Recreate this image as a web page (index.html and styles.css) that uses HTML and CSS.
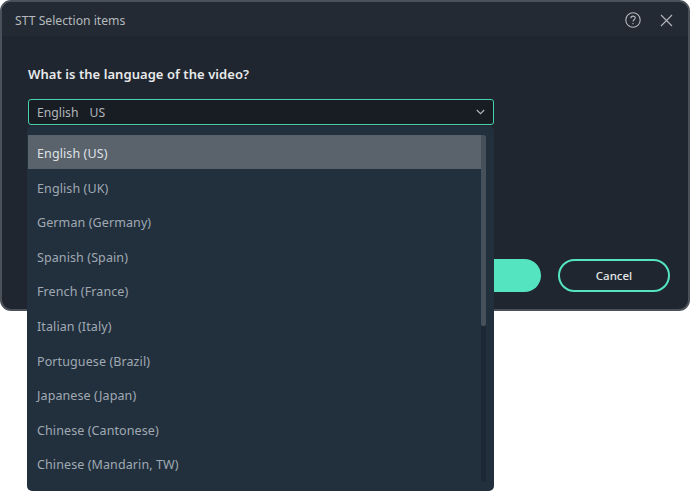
FILE: index.html
```html
<!DOCTYPE html>
<html lang="en">
<head>
<meta charset="utf-8">
<title>STT Selection items</title>
<link rel="stylesheet" href="styles.css">
</head>
<body>
<div class="dialog">
  <header class="titlebar">
    <span class="title">STT Selection items</span>
    <div class="title-icons">
      <svg class="icon" width="16" height="16" viewBox="0 0 16 16" fill="none" stroke="#b4b8bc" stroke-width="1.1"><circle cx="8" cy="8" r="7.2"/><path d="M5.8 6.2c0-1.3 1-2.1 2.2-2.1s2.2.8 2.2 2c0 1.7-2.2 1.7-2.2 3.4"/><path d="M8 11v1.2"/></svg>
      <svg class="icon" width="13" height="13" viewBox="0 0 13 13" fill="none" stroke="#b4b8bc" stroke-width="1.1"><path d="M1 1l11 11M12 1L1 12"/></svg>
    </div>
  </header>
  <main class="content">
    <h1 class="question">What is the language of the video?</h1>
    <div class="select-wrap">
      <div class="select">
        <span class="select-value"><span>English</span><span>US</span></span>
        <svg class="chevron" width="9" height="6" viewBox="0 0 9 6" fill="none" stroke="#b4b8bc" stroke-width="1.1"><path d="M.8 1l3.7 3.7L8.2 1"/></svg>
      </div>
      <div class="dropdown">
        <ul class="list">
          <li class="item active">English (US)</li>
          <li class="item">English (UK)</li>
          <li class="item">German (Germany)</li>
          <li class="item">Spanish (Spain)</li>
          <li class="item">French (France)</li>
          <li class="item">Italian (Italy)</li>
          <li class="item">Portuguese (Brazil)</li>
          <li class="item">Japanese (Japan)</li>
          <li class="item">Chinese (Cantonese)</li>
          <li class="item">Chinese (Mandarin, TW)</li>
        </ul>
        <div class="scrolltrack"><div class="scrollthumb"></div></div>
      </div>
    </div>
    <div class="actions">
      <button class="btn primary">OK</button>
      <button class="btn secondary">Cancel</button>
    </div>
  </main>
</div>
</body>
</html>
```
FILE: styles.css
```css
* { box-sizing: border-box; }
html, body { margin: 0; padding: 0; background: #fff; }
body { width: 690px; height: 491px; overflow: hidden; font-family: "Noto Sans", "Open Sans", sans-serif; }
.dialog {
  width: 690px; height: 311px;
  background: #1f262f;
  border: 2px solid #4b5159;
  border-radius: 11px;
  display: flex; flex-direction: column;
}
.titlebar {
  height: 34px; flex: none;
  background: #232a33;
  border-radius: 9px 9px 0 0;
  display: flex; align-items: center; justify-content: space-between;
  padding: 2px 15px 0 13px;
}
.title { font-size: 12.2px; color: #b6babe; }
.title-icons { display: flex; align-items: center; gap: 19px; }
.icon { display: block; }
.content { flex: 1; padding: 28px 18px 17px 26px; display: flex; flex-direction: column; }
.question { margin: 0 0 15px; font-size: 13px; line-height: 20px; font-weight: 600; letter-spacing: .06px; color: #e8eaeb; }
.select-wrap { position: relative; width: 466px; }
.select {
  height: 26px;
  background: #181d24;
  border: 1px solid #47d2ae;
  border-radius: 3px;
  display: flex; align-items: center; justify-content: space-between;
  padding: 0 8px;
}
.select-value { display: flex; gap: 11px; font-size: 12.2px; line-height: 18px; padding-top: 2px; color: #b0b5b9; }
.dropdown {
  position: absolute; left: -1px; top: 27px;
  width: 467px; height: 365px;
  background: #22303e;
  border-radius: 5px;
  padding-top: 9px;
}
.list { list-style: none; margin: 0; padding: 0 12px 0 1px; }
.item {
  height: 34.6px; line-height: 37.6px;
  padding-left: 9px;
  font-size: 12.5px; letter-spacing: .1px; color: #a0a9b2;
}
.item.active { height: 34px; margin-bottom: .6px; background: #5a636c; color: #dfe2e5; }
.scrolltrack {
  position: absolute; left: 454px; top: 9px;
  width: 5px; height: 347px;
  background: #1c2833; border-radius: 2px;
}
.scrollthumb { width: 5px; height: 191px; background: #46505a; border-radius: 2px; }
.actions { margin-top: auto; display: flex; justify-content: flex-end; gap: 17px; }
.btn {
  height: 33px; width: 112px;
  border-radius: 17px;
  font: 500 11.5px "Noto Sans", "Open Sans", sans-serif;
  padding: 0;
}
.primary { background: #54e4c0; border: none; color: #10302a; }
.secondary { background: transparent; border: 2px solid #54e4c0; color: #e4e7e9; }
```
